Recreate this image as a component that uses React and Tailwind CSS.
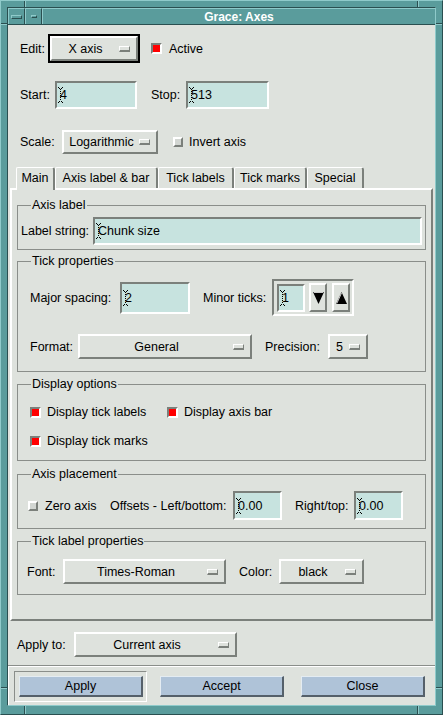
import React from 'react';

const bevelOut = 'border-2 border-t-white border-l-white border-r-[#7b807b] border-b-[#7b807b]';
const bevelIn = 'border-2 border-t-[#7b807b] border-l-[#7b807b] border-r-white border-b-white';

function IBeam() {
  // stippled Motif insertion cursor
  const dots = [];
  for (let y = 2; y < 14; y += 2) dots.push(<rect key={y} x="2" y={y} width="1" height="1" />);
  return (
    <svg width="5" height="16" viewBox="0 0 5 16" className="shrink-0 fill-black">
      <rect x="0" y="0" width="1" height="1" />
      <rect x="4" y="0" width="1" height="1" />
      <rect x="1" y="1" width="1" height="1" />
      <rect x="3" y="1" width="1" height="1" />
      {dots}
      <rect x="1" y="14" width="1" height="1" />
      <rect x="3" y="14" width="1" height="1" />
      <rect x="0" y="15" width="1" height="1" />
      <rect x="4" y="15" width="1" height="1" />
    </svg>
  );
}

function Field({ value, className }) {
  return (
    <div className={`flex items-center bg-[#c7e3df] pl-[1px] ${bevelIn} ${className}`}>
      <IBeam />
      <span className="-ml-[3px]">{value}</span>
    </div>
  );
}

function OptionBtn({ children, className }) {
  return (
    <div className={`flex items-center bg-[#dee2dd] ${bevelOut} ${className}`}>
      <span className="flex-1 text-center whitespace-nowrap">{children}</span>
      <span className="w-[11px] h-[6px] mr-[6px] border border-t-white border-l-white border-r-[#7b807b] border-b-[#7b807b] border-b-2" />
    </div>
  );
}

function Check({ on, className = '' }) {
  if (on) {
    return (
      <span className={`block w-[11px] h-[11px] shrink-0 bg-[#ff0000] border-2 border-t-[#7b807b] border-l-[#7b807b] border-r-white border-b-white ${className}`} />
    );
  }
  return (
    <span className={`block w-[10px] h-[10px] shrink-0 bg-[#d2d6d2] border-2 border-t-white border-l-white border-r-[#7b807b] border-b-[#7b807b] ${className}`} />
  );
}

function Group({ title, className, children }) {
  return (
    <fieldset className={`border border-[#8a8e8a] ${className}`}>
      <legend className="ml-[13px] px-[1px] leading-[14px]">{title}</legend>
      {children}
    </fieldset>
  );
}

function Arrow({ up }) {
  return (
    <div className={`w-[18px] h-[29px] flex items-center justify-center bg-[#dee2dd] ${bevelOut}`}>
      <svg width="11" height="12" viewBox="0 0 11 12">
        {up ? (
          <>
            <polygon points="5.5,0 11,12 0,12" fill="#000" />
            <line x1="5.5" y1="1" x2="0.8" y2="11.5" stroke="#fff" strokeWidth="0.8" />
          </>
        ) : (
          <>
            <polygon points="0,0 11,0 5.5,12" fill="#000" />
            <line x1="0.8" y1="0.5" x2="10.2" y2="0.5" stroke="#fff" strokeWidth="0.8" />
          </>
        )}
      </svg>
    </div>
  );
}

function PushBtn({ children, className = '' }) {
  return (
    <div className={`w-[124px] h-[21px] flex items-center justify-center bg-[#afc3d8] border border-t-[#e4ecf2] border-l-[#e4ecf2] border-r-2 border-b-2 border-r-[#55606a] border-b-[#55606a] ${className}`}>
      {children}
    </div>
  );
}

const tabs = [
  { label: 'Main', w: 'w-[39px]', active: true },
  { label: 'Axis label & bar', w: 'w-[103px]' },
  { label: 'Tick labels', w: 'w-[76px]' },
  { label: 'Tick marks', w: 'w-[73px]' },
  { label: 'Special', w: 'w-[57px]' },
];

export default function App() {
  return (
    <div className="relative w-[443px] h-[715px] bg-[#5a9c9c] border border-t-[#8fcaca] border-l-[#8fcaca] border-r-[#2a4f50] border-b-[#2a4f50] pt-[6px] pl-[6px] pr-[6px] pb-[8px] font-['Liberation_Sans',Arial,sans-serif] text-[12.5px] leading-[14px] text-black">
      {/* resize corner separators */}
      <span className="absolute top-0 left-[23px] w-[2px] h-[6px] border-l border-l-[#2a4f50] border-r border-r-[#8fcaca]" />
      <span className="absolute top-0 left-[416px] w-[2px] h-[6px] border-l border-l-[#2a4f50] border-r border-r-[#8fcaca]" />
      <span className="absolute bottom-0 left-[23px] w-[2px] h-[8px] border-l border-l-[#2a4f50] border-r border-r-[#8fcaca]" />
      <span className="absolute bottom-0 left-[416px] w-[2px] h-[8px] border-l border-l-[#2a4f50] border-r border-r-[#8fcaca]" />
      <span className="absolute left-0 top-[22px] w-[6px] h-[2px] border-t border-t-[#2a4f50] border-b border-b-[#8fcaca]" />
      <span className="absolute right-0 top-[22px] w-[6px] h-[2px] border-t border-t-[#2a4f50] border-b border-b-[#8fcaca]" />
      <span className="absolute left-0 top-[686px] w-[6px] h-[2px] border-t border-t-[#2a4f50] border-b border-b-[#8fcaca]" />
      <span className="absolute right-0 top-[686px] w-[6px] h-[2px] border-t border-t-[#2a4f50] border-b border-b-[#8fcaca]" />

      <div className="w-full h-full flex flex-col border border-t-[#2a4f50] border-l-[#2a4f50] border-r-[#8fcaca] border-b-[#8fcaca]">
        {/* title bar */}
        <div className="flex h-[17px] border-b border-b-[#2a4f50]">
          <div className="w-[17px] flex items-center justify-center border-t border-l border-t-[#8fcaca] border-l-[#8fcaca] border-r border-r-[#2a4f50]">
            <span className="w-[11px] h-[4px] border border-t-[#8fcaca] border-l-[#8fcaca] border-r-[#2a4f50] border-b-[#2a4f50]" />
          </div>
          <div className="w-[17px] flex items-center justify-center border-t border-l border-t-[#8fcaca] border-l-[#8fcaca] border-r border-r-[#2a4f50]">
            <span className="w-[6px] h-[3px] border border-t-[#8fcaca] border-l-[#8fcaca] border-r-[#2a4f50] border-b-[#2a4f50]" />
          </div>
          <div className="flex-1 flex items-center justify-center text-white font-bold text-[12px] border-t border-l border-t-[#8fcaca] border-l-[#8fcaca]">
            Grace: Axes
          </div>
        </div>

        {/* dialog body */}
        <div className="flex-1 bg-[#dee2dd] flex flex-col">
          <div className="flex items-center h-[29px] mt-[9px] pl-[12px]">
            <span className="w-[28px]">Edit:</span>
            <div className="w-[92px] h-[29px] border-2 border-black">
              <OptionBtn className="w-full h-full">X axis</OptionBtn>
            </div>
            <Check on className="ml-[11px]" />
            <span className="ml-[7px]">Active</span>
          </div>

          <div className="flex items-center h-[28px] mt-[18px] pl-[12px]">
            <span className="w-[35px]">Start:</span>
            <Field className="w-[82px] h-[28px]" value="4" />
            <span className="ml-[14px] w-[35px]">Stop:</span>
            <Field className="w-[83px] h-[28px]" value="513" />
          </div>

          <div className="flex items-center h-[24px] mt-[21px] pl-[12px]">
            <span className="w-[42px]">Scale:</span>
            <OptionBtn className="w-[96px] h-[24px]">Logarithmic</OptionBtn>
            <Check className="ml-[15px]" />
            <span className="ml-[6px]">Invert axis</span>
          </div>

          {/* tabs */}
          <div className="flex items-end h-[21px] mt-[13px] pl-[8px]">
            {tabs.map((t) => (
              <div
                key={t.label}
                className={`${t.w} flex items-center justify-center whitespace-nowrap border-t border-l border-t-white border-l-white border-r-2 border-r-[#7b807b] rounded-tl-[2px] rounded-tr-[3px] ${
                  t.active ? 'h-[23px] -mb-[2px] relative z-10 bg-[#dee2dd] pb-[2px]' : 'h-[21px]'
                }`}
              >
                {t.label}
              </div>
            ))}
          </div>

          {/* tab page */}
          <div className={`ml-[2px] w-[423px] h-[433px] px-[5px] flex flex-col ${bevelOut}`}>
            <Group title="Axis label" className="mt-[8px]">
              <div className="flex items-center pl-[3px] pr-[3px] pt-[5px] pb-[4px]">
                <span className="w-[72px]">Label string:</span>
                <Field className="flex-1 h-[28px]" value="Chunk size" />
              </div>
            </Group>

            <Group title="Tick properties" className="mt-[4px]">
              <div className="pt-[11px] pb-[12px] pl-[12px]">
                <div className="flex items-center h-[37px]">
                  <span className="w-[90px]">Major spacing:</span>
                  <Field className="w-[70px] h-[32px]" value="2" />
                  <span className="ml-[13px] w-[69px]">Minor ticks:</span>
                  <div className={`w-[82px] h-[37px] flex items-center pl-[3px] ${bevelIn}`}>
                    <Field className="w-[28px] h-[28px]" value="1" />
                    <div className="ml-[4px]"><Arrow /></div>
                    <div className="ml-[5px]"><Arrow up /></div>
                  </div>
                </div>
                <div className="flex items-center h-[25px] mt-[18px]">
                  <span className="w-[48px]">Format:</span>
                  <OptionBtn className="w-[174px] h-[25px]">General</OptionBtn>
                  <span className="ml-[13px] w-[63px]">Precision:</span>
                  <OptionBtn className="w-[40px] h-[25px]">5</OptionBtn>
                </div>
              </div>
            </Group>

            <Group title="Display options" className="mt-[5px]">
              <div className="pt-[13px] pb-[11px] pl-[12px]">
                <div className="flex items-center h-[16px]">
                  <div className="w-[137px] flex items-center">
                    <Check on />
                    <span className="ml-[6px] whitespace-nowrap">Display tick labels</span>
                  </div>
                  <Check on />
                  <span className="ml-[6px]">Display axis bar</span>
                </div>
                <div className="flex items-center h-[16px] mt-[13px]">
                  <Check on />
                  <span className="ml-[6px]">Display tick marks</span>
                </div>
              </div>
            </Group>

            <Group title="Axis placement" className="mt-[6px]">
              <div className="flex items-center h-[29px] mt-[10px] mb-[8px] pl-[10px]">
                <Check />
                <span className="ml-[7px] w-[65px]">Zero axis</span>
                <span className="w-[123px] whitespace-nowrap">Offsets - Left/bottom:</span>
                <Field className="w-[49px] h-[29px]" value="0.00" />
                <span className="ml-[13px] w-[59px]">Right/top:</span>
                <Field className="w-[49px] h-[29px]" value="0.00" />
              </div>
            </Group>

            <Group title="Tick label properties" className="mt-[5px]">
              <div className="flex items-center h-[25px] mt-[11px] mb-[10px] pl-[9px]">
                <span className="w-[36px]">Font:</span>
                <OptionBtn className="w-[163px] h-[25px]">Times-Roman</OptionBtn>
                <span className="ml-[13px] w-[40px]">Color:</span>
                <OptionBtn className="w-[85px] h-[25px]">black</OptionBtn>
              </div>
            </Group>
          </div>

          <div className="flex items-center h-[25px] mt-[11px] pl-[9px]">
            <span className="w-[57px]">Apply to:</span>
            <OptionBtn className="w-[163px] h-[25px]">Current axis</OptionBtn>
          </div>

          {/* action area */}
          <div className="flex-1 mt-[8px] border-t border-t-[#8a8e8a] shadow-[inset_1px_1px_0_#fff] flex items-start">
            <div className="mt-[5px] ml-[6px] w-[133px] h-[31px] flex items-center pl-[4px] border border-t-[#8a8e8a] border-l-[#8a8e8a] border-r-white border-b-white">
              <PushBtn>Apply</PushBtn>
            </div>
            <PushBtn className="mt-[10px] ml-[13px]">Accept</PushBtn>
            <PushBtn className="mt-[10px] ml-[17px]">Close</PushBtn>
          </div>
        </div>
      </div>
    </div>
  );
}
